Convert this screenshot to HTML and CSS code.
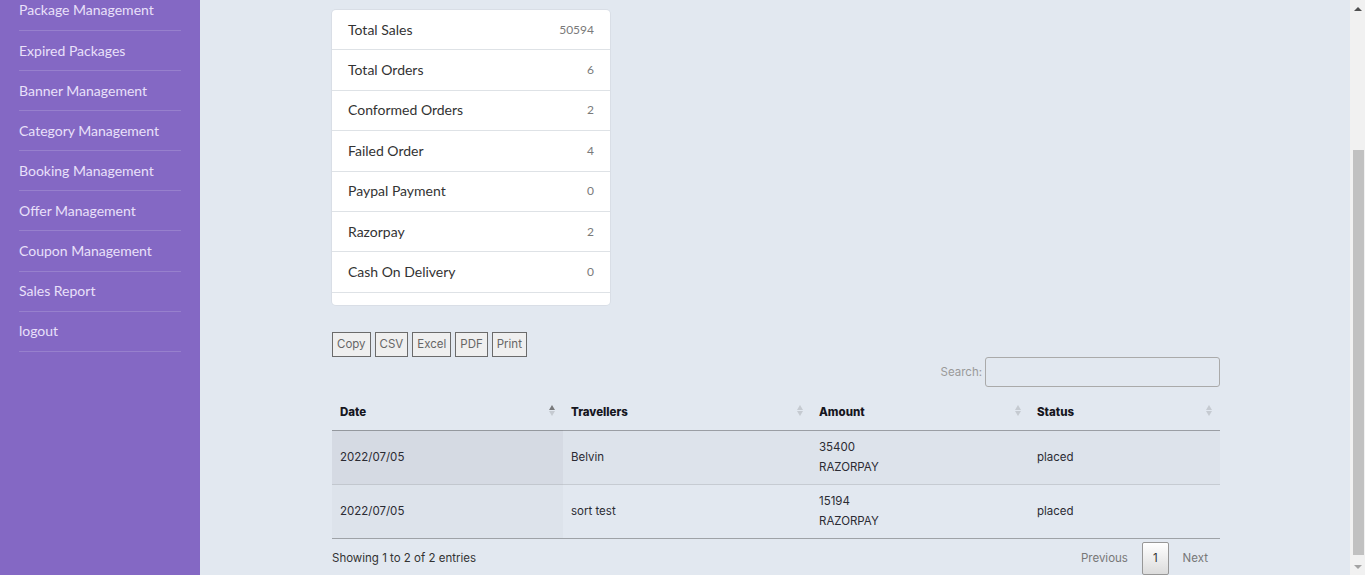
FILE: index.html
```html
<!DOCTYPE html>
<html lang="en">
<head>
<meta charset="utf-8">
<title>Sales Report</title>
<link rel="stylesheet" href="styles.css">
</head>
<body>
<div class="app">
  <aside class="sidebar">
    <ul class="nav">
      <li class="nav-item nav-item-first">Package Management</li>
      <li class="nav-item">Expired Packages</li>
      <li class="nav-item">Banner Management</li>
      <li class="nav-item">Category Management</li>
      <li class="nav-item">Booking Management</li>
      <li class="nav-item">Offer Management</li>
      <li class="nav-item">Coupon Management</li>
      <li class="nav-item">Sales Report</li>
      <li class="nav-item">logout</li>
    </ul>
  </aside>
  <main class="main">
    <div class="container">
      <ul class="stats">
        <li class="stat-row"><span class="stat-label">Total Sales</span><span class="stat-value">50594</span></li>
        <li class="stat-row"><span class="stat-label">Total Orders</span><span class="stat-value">6</span></li>
        <li class="stat-row"><span class="stat-label">Conformed Orders</span><span class="stat-value">2</span></li>
        <li class="stat-row"><span class="stat-label">Failed Order</span><span class="stat-value">4</span></li>
        <li class="stat-row"><span class="stat-label">Paypal Payment</span><span class="stat-value">0</span></li>
        <li class="stat-row"><span class="stat-label">Razorpay</span><span class="stat-value">2</span></li>
        <li class="stat-row"><span class="stat-label">Cash On Delivery</span><span class="stat-value">0</span></li>
        <li class="stat-end"></li>
      </ul>

      <div class="dt-buttons">
        <button class="dt-button">Copy</button>
        <button class="dt-button">CSV</button>
        <button class="dt-button">Excel</button>
        <button class="dt-button">PDF</button>
        <button class="dt-button">Print</button>
      </div>

      <div class="dt-filter">
        <label class="dt-filter-label">Search:</label>
        <span class="dt-input"></span>
      </div>

      <table class="dt">
        <colgroup>
          <col class="c-date"><col class="c-trav"><col class="c-amt"><col class="c-status">
        </colgroup>
        <thead>
          <tr>
            <th class="sort sort-asc">Date</th>
            <th class="sort">Travellers</th>
            <th class="sort">Amount</th>
            <th class="sort">Status</th>
          </tr>
        </thead>
        <tbody>
          <tr class="odd">
            <td class="sorted">2022/07/05</td>
            <td>Belvin</td>
            <td class="amt">35400<br>RAZORPAY</td>
            <td>placed</td>
          </tr>
          <tr class="even">
            <td class="sorted">2022/07/05</td>
            <td>sort test</td>
            <td class="amt">15194<br>RAZORPAY</td>
            <td>placed</td>
          </tr>
        </tbody>
      </table>

      <div class="dt-footer">
        <div class="dt-info">Showing 1 to 2 of 2 entries</div>
        <div class="dt-paginate">
          <span class="pg-btn">Previous</span>
          <span class="pg-btn current">1</span>
          <span class="pg-btn">Next</span>
        </div>
      </div>
    </div>
  </main>
  <div class="scrollbar">
    <span class="sb-arrow sb-up"></span>
    <span class="sb-track"><span class="sb-thumb"></span></span>
    <span class="sb-arrow sb-down"></span>
  </div>
</div>
</body>
</html>
```

FILE: styles.css
```css
html, body {
  margin: 0;
  padding: 0;
}
body {
  background: #e2e8f0;
  font-family: Lato, "Open Sans", sans-serif;
  overflow: hidden;
}
.app {
  display: flex;
  height: 575px;
  overflow: hidden;
}
.sidebar {
  width: 200px;
  flex: 0 0 200px;
  background: #8468c4;
  color: #ece4fb;
}
.nav {
  list-style: none;
  margin: 0 19px;
  padding: 0;
}
.nav-item {
  height: 40.1px;
  box-sizing: border-box;
  display: flex;
  align-items: center;
  border-bottom: 1px solid rgba(255, 255, 255, 0.16);
  font-size: 14px;
  color: #e9e0fa;
  padding-bottom: 1px;
}
.nav-item-first {
  height: 31px;
  padding-bottom: 11px;
}
.main {
  flex: 1 1 auto;
  min-width: 0;
  padding: 10px 0 0 2px;
}
.container {
  width: 888px;
  margin: 0 auto;
}
.stats {
  list-style: none;
  margin: 0;
  padding: 0;
  width: 278px;
  background: #fff;
  border-radius: 4px;
  box-shadow: 0 0 0 1px rgba(0, 0, 0, 0.04);
  overflow: hidden;
}
.stat-row {
  height: 40.4px;
  box-sizing: border-box;
  display: flex;
  align-items: center;
  justify-content: space-between;
  padding: 0 16px 1px;
  border-bottom: 1px solid #dee2e6;
}
.stat-label {
  font-size: 14px;
  color: #333;
}
.stat-value {
  font-size: 12px;
  color: #7a7a7a;
}
.stat-end {
  height: 12px;
}
.dt-buttons {
  display: flex;
  gap: 4px;
  margin-top: 27px;
}
.dt-button {
  height: 25px;
  box-sizing: border-box;
  padding: 0 4px;
  margin: 0;
  background: #efefef;
  border: 1px solid #6b6b6b;
  border-radius: 0;
  font-family: Inter, Lato, sans-serif;
  font-size: 11.5px;
  color: #666;
  line-height: 23px;
}
.dt-filter {
  display: flex;
  justify-content: flex-end;
  align-items: center;
  gap: 3px;
  margin-top: 0;
}
.dt-filter-label {
  font-family: Inter, Lato, sans-serif;
  font-size: 11.5px;
  color: #9a9a9a;
}
.dt-input {
  width: 235px;
  height: 30px;
  box-sizing: border-box;
  border: 1px solid #aaa;
  border-radius: 3px;
}
.dt {
  width: 888px;
  margin-top: 8px;
  border-collapse: collapse;
  table-layout: fixed;
  font-family: Inter, Lato, sans-serif;
  font-size: 11.5px;
  color: #2b2b33;
}
.c-date { width: 231px; }
.c-trav { width: 248px; }
.c-amt { width: 218px; }
.c-status { width: 191px; }
.dt th {
  text-align: left;
  font-weight: 800;
  color: #16161e;
  padding: 9px 8px 10px;
  line-height: 16px;
  border-bottom: 1px solid rgba(0, 0, 0, 0.3);
  position: relative;
}
.sort::before,
.sort::after {
  content: "";
  position: absolute;
  right: 8px;
  width: 0;
  height: 0;
  border-left: 3px solid transparent;
  border-right: 3px solid transparent;
  opacity: 0.2;
}
.sort::before {
  top: 10px;
  border-bottom: 5px solid #555;
}
.sort::after {
  top: 16px;
  border-top: 5px solid #555;
}
.sort-asc::before {
  opacity: 0.75;
}
.dt td {
  padding: 6px 8px 7px;
  line-height: 20px;
  vertical-align: middle;
  border-bottom: 1px solid rgba(0, 0, 0, 0.12);
}
.dt tbody tr:last-child td {
  border-bottom: 1px solid rgba(0, 0, 0, 0.3);
}
.dt tr.odd td {
  background: #dde3eb;
}
.dt tr.odd td.sorted {
  background: #d5dae3;
}
.dt tr.even td.sorted {
  background: #dde3eb;
}
.dt-footer {
  display: flex;
  justify-content: space-between;
  align-items: center;
  margin-top: 3px;
  font-family: Inter, Lato, sans-serif;
  font-size: 11.5px;
}
.dt-info {
  color: #333;
}
.dt-paginate {
  display: flex;
  gap: 2px;
}
.pg-btn {
  padding: 6px 11px;
  line-height: 19px;
  border: 1px solid transparent;
  border-radius: 2px;
  color: #777;
}
.pg-btn.current {
  padding: 6px 10px;
  color: #333;
  border-color: #979797;
  background: linear-gradient(to bottom, #ffffff 0%, #dcdcdc 100%);
}
.scrollbar {
  width: 15px;
  flex: 0 0 15px;
  background: #f1f1f1;
  display: flex;
  flex-direction: column;
  align-items: center;
}
.sb-arrow {
  flex: 0 0 17px;
  display: flex;
  align-items: center;
  justify-content: center;
}
.sb-up::before {
  content: "";
  border-left: 4px solid transparent;
  border-right: 4px solid transparent;
  border-bottom: 4px solid #505050;
}
.sb-down::before {
  content: "";
  border-left: 4px solid transparent;
  border-right: 4px solid transparent;
  border-top: 4px solid #a3a3a3;
}
.sb-track {
  flex: 1 1 auto;
  width: 100%;
  display: flex;
  flex-direction: column;
  justify-content: flex-end;
  align-items: center;
  padding-bottom: 3px;
  box-sizing: border-box;
}
.sb-thumb {
  width: 11px;
  height: 405px;
  background: #c1c1c1;
  margin-left: 2px;
}
```
